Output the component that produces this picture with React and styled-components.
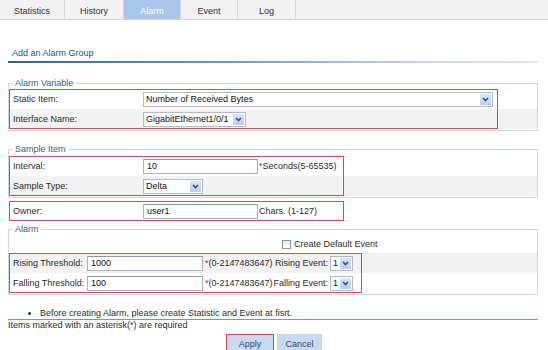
import React from "react";
import styled, { createGlobalStyle } from "styled-components";

const Global = createGlobalStyle`
  html, body { margin: 0; padding: 0; background: #fff; }
  body {
    font-family: "Liberation Sans", Arial, sans-serif;
    font-size: 9px;
    color: #2a2a2a;
    width: 548px;
    height: 350px;
    overflow: hidden;
  }
  * { box-sizing: border-box; }
`;

const Page = styled.div`
  width: 548px;
`;

const TabBar = styled.div`
  display: flex;
  height: 20px;
  background: #f1f1f1;
  border-bottom: 1px solid #d4d4d4;
`;

const Tab = styled.div`
  width: ${(p) => p.$w}px;
  border-right: 1px solid #d8d8d8;
  background: ${(p) => (p.$active ? "#a9c5e8" : "transparent")};
  color: ${(p) => (p.$active ? "#fff" : "#333")};
  display: flex;
  align-items: center;
  justify-content: center;
  padding-top: 3px;
`;

const Content = styled.div`
  padding: 0 10px 0 8px;
`;

const Title = styled.div`
  margin-top: 28px;
  padding-left: 4px;
  line-height: 11px;
  color: #24528f;
  &::after {
    content: "";
    display: block;
    height: 2px;
    margin: 2px 0 0 -4px;
    background: linear-gradient(90deg, #2f619f 0%, #6f95c4 40%, #c9d7e8 80%, #dde6f0 100%);
  }
`;

const Fieldset = styled.fieldset`
  margin: ${(p) => p.$mt}px 0 0 0;
  padding: ${(p) => p.$pt || 0}px 0 1px 0;
  border: 1px solid #c9d7e8;
  min-width: 0;
`;

const Legend = styled.legend`
  margin-left: 4px;
  padding: 0 2px;
  line-height: 12px;
  color: #3a5a8a;
`;

const Group = styled.div`
  position: relative;
  margin: ${(p) => p.$m || "0"};
`;

const Highlight = styled.div`
  position: absolute;
  top: 0;
  left: 0;
  bottom: 0;
  width: ${(p) => p.$w}px;
  border: 1px solid #e0454f;
  pointer-events: none;
`;

const Row = styled.div`
  display: flex;
  align-items: center;
  height: ${(p) => p.$h || 20}px;
  background: ${(p) => (p.$shade ? "#f2f2f2" : "transparent")};
`;

const Label = styled.span`
  width: ${(p) => p.$w}px;
  padding-left: 4px;
  flex: none;
  white-space: nowrap;
`;

const Input = styled.div`
  width: ${(p) => p.$w}px;
  height: 15px;
  flex: none;
  border: 1px solid #a9b2bf;
  border-top-color: #8f99a8;
  background: #fff;
  padding-left: 3px;
  display: flex;
  align-items: center;
  color: #111;
`;

const SelectBox = styled.div`
  width: ${(p) => p.$w}px;
  height: 15px;
  flex: none;
  border: 1px solid #b0bac8;
  background: #fff;
  display: flex;
  align-items: center;
`;

const SelectText = styled.span`
  flex: 1;
  padding-left: 2px;
  white-space: nowrap;
  overflow: hidden;
  color: #111;
`;

const SelectBtn = styled.span`
  width: 11px;
  align-self: stretch;
  margin: 1px;
  background: linear-gradient(#dbe6f7, #b9cdee);
  display: flex;
  align-items: center;
  justify-content: center;
  flex: none;
`;

const Hint = styled.span`
  margin-left: ${(p) => p.$ml || 1}px;
  width: ${(p) => (p.$w ? `${p.$w}px` : "auto")};
  flex: none;
  white-space: nowrap;
`;

const Star = styled.span`
  color: #f00;
`;

const EventLabel = styled.span`
  width: 58px;
  flex: none;
  text-align: right;
  padding-right: 2px;
  white-space: nowrap;
`;

const CheckBox = styled.span`
  width: 9px;
  height: 9px;
  margin-left: ${(p) => p.$ml}px;
  border: 1px solid #8796a8;
  background: linear-gradient(#e8e8e8, #fff);
  flex: none;
`;

const CheckText = styled.span`
  margin-left: 3px;
  white-space: nowrap;
`;

const Note = styled.ul`
  margin: 13px 0 0 0;
  padding: 0 0 0 32px;
  line-height: 11px;
  border-bottom: 1px solid #4ea5de;
`;

const Required = styled.div`
  line-height: 11px;
`;

const ButtonRow = styled.div`
  display: flex;
  justify-content: center;
  gap: 3px;
  margin-top: 3px;
`;

const Button = styled.button`
  width: ${(p) => p.$w}px;
  height: 19px;
  padding: 0;
  border: 1px solid ${(p) => (p.$hl ? "#e0454f" : "#c8d9f2")};
  background: #c8d9f2;
  color: #2b4a78;
  font-family: inherit;
  font-size: 9px;
`;

const Chevron = () => (
  <svg width="7" height="5" viewBox="0 0 7 5">
    <path d="M1 1 L3.5 3.6 L6 1" fill="none" stroke="#2a4c8c" strokeWidth="1.5" />
  </svg>
);

const Select = ({ w, value }) => (
  <SelectBox $w={w}>
    <SelectText>{value}</SelectText>
    <SelectBtn>
      <Chevron />
    </SelectBtn>
  </SelectBox>
);

const tabs = [
  ["Statistics", 65],
  ["History", 59],
  ["Alarm", 57, true],
  ["Event", 57],
  ["Log", 58],
];

export default function App() {
  return (
    <Page>
      <Global />
      <TabBar>
        {tabs.map(([t, w, a]) => (
          <Tab key={t} $w={w} $active={a}>
            {t}
          </Tab>
        ))}
      </TabBar>
      <Content>
        <Title>Add an Alarm Group</Title>

        <Fieldset $mt={14}>
          <Legend>Alarm Variable</Legend>
          <Group>
            <Row>
              <Label $w={134}>Static Item:</Label>
              <Select w={350} value="Number of Received Bytes" />
            </Row>
            <Row $shade>
              <Label $w={134}>Interface Name:</Label>
              <Select w={103} value="GigabitEthernet1/0/1" />
            </Row>
            <Highlight $w={489} />
          </Group>
        </Fieldset>

        <Fieldset $mt={12} $pt={1}>
          <Legend>Sample Item</Legend>
          <Group>
            <Row>
              <Label $w={134}>Interval:</Label>
              <Input $w={115}>10</Input>
              <Hint>
                <Star>*</Star>Seconds(5-65535)
              </Hint>
            </Row>
            <Row $shade>
              <Label $w={134}>Sample Type:</Label>
              <Select w={60} value="Delta" />
            </Row>
            <Highlight $w={335} />
          </Group>
        </Fieldset>

        <Group $m="3px 0 0 1px">
          <Row>
            <Label $w={134}>Owner:</Label>
            <Input $w={115}>user1</Input>
            <Hint>Chars. (1-127)</Hint>
          </Row>
          <Highlight $w={335} />
        </Group>

        <Fieldset $mt={2}>
          <Legend>Alarm</Legend>
          <Row $h={18}>
            <CheckBox $ml={273} />
            <CheckText>Create Default Event</CheckText>
          </Row>
          <Group>
            <Row $shade>
              <Label $w={78}>Rising Threshold:</Label>
              <Input $w={116}>1000</Input>
              <Hint $ml={2} $w={67}>
                <Star>*</Star>(0-2147483647)
              </Hint>
              <EventLabel>Rising Event:</EventLabel>
              <Select w={23} value="1" />
            </Row>
            <Row>
              <Label $w={78}>Falling Threshold:</Label>
              <Input $w={116}>100</Input>
              <Hint $ml={2} $w={67}>
                <Star>*</Star>(0-2147483647)
              </Hint>
              <EventLabel>Falling Event:</EventLabel>
              <Select w={23} value="1" />
            </Row>
            <Highlight $w={353} />
          </Group>
        </Fieldset>

        <Note>
          <li>Before creating Alarm, please create Statistic and Event at fisrt.</li>
        </Note>
        <Required>Items marked with an asterisk(*) are required</Required>
      </Content>
      <ButtonRow>
        <Button $w={48} $hl>
          Apply
        </Button>
        <Button $w={45}>Cancel</Button>
      </ButtonRow>
    </Page>
  );
}
